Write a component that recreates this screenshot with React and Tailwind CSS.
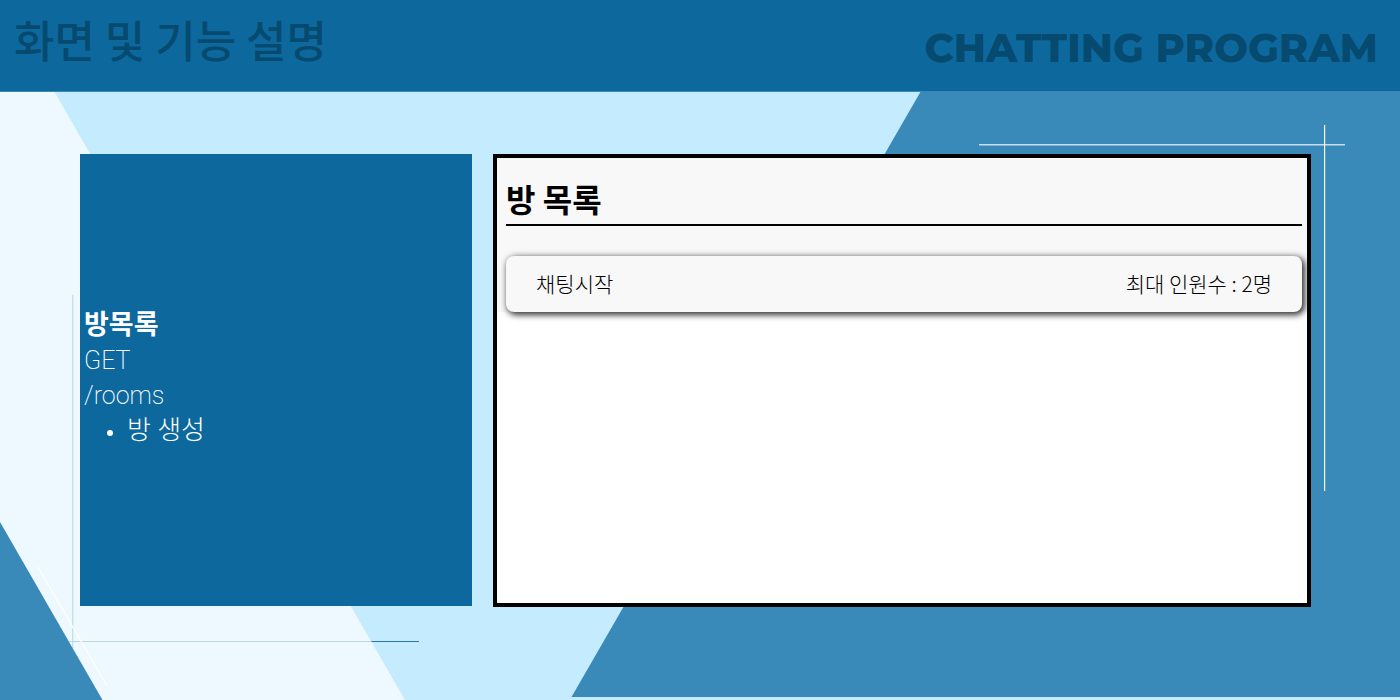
const rooms = [{ name: "채팅시작", max: 2 }];

function Backdrop() {
  return (
    <svg
      aria-hidden="true"
      className="absolute inset-0 -z-10 h-full w-full"
      viewBox="0 0 1400 700"
      preserveAspectRatio="none"
    >
      <rect width="1400" height="700" fill="#c5ebff" />
      <path d="M0 91H54L405 700H0Z" fill="#edf8ff" />
      <path d="M921 91H1400V697H571.5Z" fill="#3989b9" />
      <path d="M72.7 295V648" stroke="#c9dfe8" strokeWidth="1.4" />
      <path d="M68 641.5H371.5" stroke="#bdd5df" strokeWidth="1" />
      <path d="M371.5 641.5H419" stroke="#2f74a8" strokeWidth="1" />
      <path d="M38 567L107 686" stroke="#ffffff" strokeWidth="1.4" />
      <path d="M0 522L102.5 700H0Z" fill="#3989b9" />
      <path d="M979 144.7H1345" stroke="#c8deeb" strokeWidth="1.4" />
      <path d="M1324.6 125V491" stroke="#f4f9fc" strokeWidth="1.2" />
    </svg>
  );
}

export default function App() {
  return (
    <div className="relative isolate flex min-h-screen flex-col font-['Noto_Sans_CJK_KR',sans-serif]">
      <Backdrop />
      <header className="flex h-23 items-start justify-between border-b border-[#3989b9] bg-[#0d689e] pr-[22px] pl-3.5 text-[#064b6f]">
        <h1 className="pt-[7px] text-[44px] leading-[64px] font-medium">화면 및 기능 설명</h1>
        <p className="pt-4 font-['Montserrat','Inter',sans-serif] text-[40px] leading-[64px] font-extrabold">
          CHATTING PROGRAM
        </p>
      </header>
      <main className="grid flex-1 grid-cols-[392fr_818fr] gap-x-[21px] pt-[62px] pr-[89px] pb-[93px] pl-20">
        <section className="mb-px flex flex-col justify-center bg-[#0d689e] px-1 pb-1 font-['Roboto','Noto_Sans_CJK_KR',sans-serif] text-[26px] leading-[35px] font-light text-white">
          <h2 className="text-[27px] font-bold">방목록</h2>
          <p className="text-[25px] font-extralight">GET</p>
          <p className="text-[25px] font-extralight">/rooms</p>
          <ul className="pl-[23px]">
            <li className="flex items-center gap-3.5 font-extralight">
              <span aria-hidden="true" className="mt-1 size-1.5 rounded-full bg-white" />
              방 생성
            </li>
          </ul>
        </section>
        <section className="border-4 border-black bg-white">
          <div className="bg-[#f8f8f8] pr-[5px] pl-[9px]">
            <h2 className="border-b-2 border-black pt-[18px] pb-1 text-[32px] leading-[44px] font-bold text-black">
              방 목록
            </h2>
            <ul className="pt-[30px]">
              {rooms.map((room) => (
                <li key={room.name}>
                  <a
                    href="#room"
                    className="flex h-14 items-center justify-between rounded-lg bg-[#f8f8f8] px-[30px] text-[21px] font-light text-black shadow-[2px_2px_6px_1px_#333333]"
                  >
                    <span>{room.name}</span>
                    <span>최대 인원수 : {room.max}명</span>
                  </a>
                </li>
              ))}
            </ul>
          </div>
        </section>
      </main>
    </div>
  );
}
